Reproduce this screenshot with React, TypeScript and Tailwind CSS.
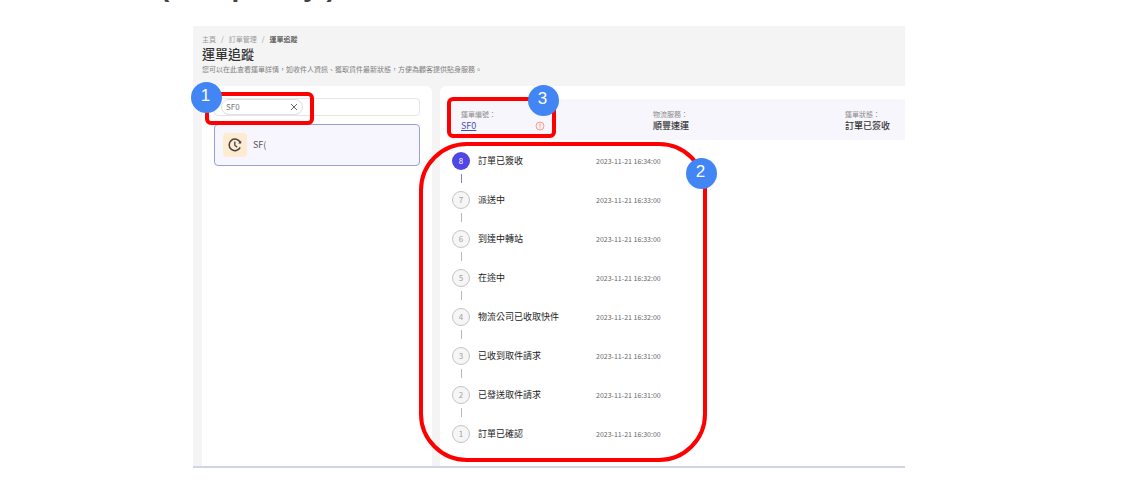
import { useState } from 'react';

interface TrackingEvent {
  step: number;
  label: string;
  time: string;
}

const events: TrackingEvent[] = [
  { step: 8, label: '訂單已簽收', time: '2023-11-21 16:34:00' },
  { step: 7, label: '派送中', time: '2023-11-21 16:33:00' },
  { step: 6, label: '到達中轉站', time: '2023-11-21 16:33:00' },
  { step: 5, label: '在途中', time: '2023-11-21 16:32:00' },
  { step: 4, label: '物流公司已收取快件', time: '2023-11-21 16:32:00' },
  { step: 3, label: '已收到取件請求', time: '2023-11-21 16:31:00' },
  { step: 2, label: '已發送取件請求', time: '2023-11-21 16:31:00' },
  { step: 1, label: '訂單已確認', time: '2023-11-21 16:30:00' },
];

function ClockIcon() {
  return (
    <svg viewBox="0 0 14 14" className="size-3.5" fill="none" stroke="#444" strokeWidth="1.5">
      <path d="M12.2 4.4A5.8 5.8 0 1 0 12.2 9.4" />
      <path d="M6.8 3.6V7.2L9.2 9.2" strokeWidth="1.3" />
      <path d="M13.2 2.6V5.6H10.2z" fill="#444" stroke="none" />
    </svg>
  );
}

function InfoIcon() {
  return (
    <svg viewBox="0 0 10 10" className="size-2.5" fill="none" stroke="#f4a090">
      <circle cx="5" cy="5" r="4" fill="#fdf0ee" />
      <path d="M5 2.6V5.6M5 6.4V7.4" />
    </svg>
  );
}

function Badge({ n, className }: { n: number; className: string }) {
  return (
    <span
      className={`absolute flex size-[31px] items-center justify-center rounded-full bg-[#4285f4] pr-0.5 pb-1 font-['Liberation_Sans',sans-serif] text-[17px] leading-5 text-white ${className}`}
    >
      {n}
    </span>
  );
}

function SearchPanel() {
  const [keyword, setKeyword] = useState('SF0');

  return (
    <section className="w-[230px] shrink-0 rounded-t-md bg-white px-3 pt-3">
      <div className="flex h-[18px] items-center rounded-sm border border-[#e6e6e6] px-1.5">
        {keyword && (
          <span className="flex h-4 w-[82px] shrink-0 items-center justify-between rounded-full border border-[#dedede] px-1 text-[8px] text-[#777]">
            {keyword}
            <button type="button" aria-label="清除" onClick={() => setKeyword('')}>
              <svg viewBox="0 0 8 8" className="size-2" stroke="#555" strokeWidth="0.9">
                <path d="M1 1L7 7M7 1L1 7" />
              </svg>
            </button>
          </span>
        )}
        <input type="text" aria-label="搜尋運單" className="h-3 min-w-0 flex-1 bg-transparent text-[8px] outline-none" />
      </div>
      <button
        type="button"
        className="mt-2 flex h-[42px] w-full items-center gap-1.5 rounded-sm border border-[#98a0d6] bg-[#f7f6fe] px-2"
      >
        <span className="flex size-6 items-center justify-center rounded-sm bg-[#feebd1]">
          <ClockIcon />
        </span>
        <span className="text-[9px] text-[#555]">SF(</span>
      </button>
    </section>
  );
}

function Summary() {
  return (
    <dl className="flex h-[41px] items-center overflow-hidden bg-[#f7f6fc] pl-[9px]">
      <div className="w-48 shrink-0">
        <dt className="text-[7px] leading-3 text-[#8a8a8a]">運單編號：</dt>
        <dd className="flex w-[84px] items-center justify-between text-[9px] leading-3">
          <a href="#timeline" className="text-[#4450b8] underline">
            SF0
          </a>
          <InfoIcon />
        </dd>
      </div>
      <div className="w-48 shrink-0">
        <dt className="text-[7px] leading-3 text-[#8a8a8a]">物流服務：</dt>
        <dd className="text-[9px] leading-3 font-medium text-[#333]">順豐速運</dd>
      </div>
      <div className="shrink-0">
        <dt className="text-[7px] leading-3 text-[#8a8a8a]">運單狀態：</dt>
        <dd className="text-[9px] leading-3 font-medium text-[#333]">訂單已簽收</dd>
      </div>
    </dl>
  );
}

function Timeline() {
  return (
    <ol id="timeline" className="mt-3">
      {events.map((event, i) => (
        <li key={event.step} className="flex h-[39px] items-start">
          <div className="mr-2 flex flex-col items-center gap-1 text-[8px]">
            <span
              className={
                i === 0
                  ? 'flex size-[18px] items-center justify-center rounded-full bg-[#4f46e5] text-white'
                  : 'flex size-[18px] items-center justify-center rounded-full border border-[#c4c4c4] bg-[#f6f6f6] text-[#a0a0a0]'
              }
            >
              {event.step}
            </span>
            {i < events.length - 1 && (
              <span className={i === 0 ? 'h-[9px] w-px bg-[#8088c8]' : 'h-[9px] w-px bg-[#b8b8b8]'} />
            )}
          </div>
          <span className="w-[118px] text-[9px] leading-[18px] text-[#222]">{event.label}</span>
          <time className="text-[7px] leading-[18px] text-[#666]">{event.time}</time>
        </li>
      ))}
    </ol>
  );
}

export default function App() {
  return (
    <div className="bg-white pr-[241px] font-['Noto_Sans_CJK_TC',sans-serif]">
      <header className="flex h-[26px] items-end overflow-hidden pb-[25px] pl-40">
        <h2 className="font-['Liberation_Sans',sans-serif] text-[28px] leading-7 font-bold whitespace-pre text-[#434343]">
          {'(Comp. May )'}
        </h2>
      </header>

      <main className="relative ml-[193px] border-b-2 border-[#d0d4e6] bg-[#f4f4f4] pt-2 pl-[9px]">
        <nav className="flex gap-[5px] text-[7px] leading-[10px] text-[#999]">
          <a href="#home">主頁</a>
          <span>/</span>
          <a href="#orders">訂單管理</a>
          <span>/</span>
          <span className="font-medium text-[#444]">運單追蹤</span>
        </nav>
        <h1 className="text-[13px] leading-5 font-medium text-[#333]">運單追蹤</h1>
        <p className="text-[7px] leading-[10px] text-[#808080]">
          您可以在此查看運單詳情，如收件人資訊、獲取貨件最新狀態，方便為顧客提供貼身服務。
        </p>

        <div className="mt-3 flex gap-2">
          <SearchPanel />
          <section className="min-w-0 flex-1 rounded-tl-md bg-white pt-[13px] pb-0.5 pl-3">
            <Summary />
            <Timeline />
          </section>
        </div>

        {/* callouts */}
        <div className="absolute top-[66px] left-3 h-[33px] w-[109px] rounded-md border-4 border-[#ff0000]" />
        <Badge n={1} className="top-14 -left-0.5" />
        <div className="absolute top-[71px] left-[254px] h-[41px] w-[109px] rounded-md border-4 border-[#ff0000]" />
        <Badge n={3} className="top-[59px] left-[335px]" />
        <div className="absolute top-[116px] left-[226px] h-80 w-72 rounded-[48px] border-4 border-[#ff0000]" />
        <Badge n={2} className="top-[132px] left-[493px]" />
      </main>
    </div>
  );
}
